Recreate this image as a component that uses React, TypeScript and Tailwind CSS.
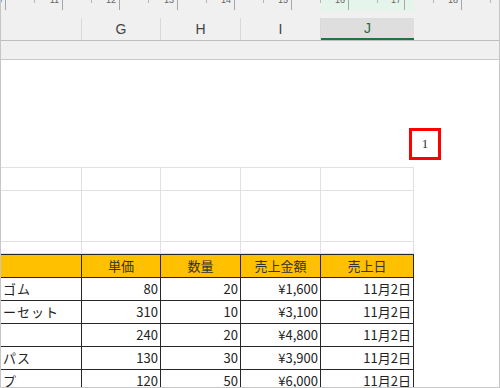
import React from "react";

// ─── Data ─────────────────────────────────────────────────────────
const columns = ["G", "H", "I", "J"];
const headers = ["", "単価", "数量", "売上金額", "売上日"];
const rows = [
  ["ゴム", "80", "20", "¥1,600", "11月2日"],
  ["ーセット", "310", "10", "¥3,100", "11月2日"],
  ["", "240", "20", "¥4,800", "11月2日"],
  ["パス", "130", "30", "¥3,900", "11月2日"],
  ["プ", "120", "50", "¥6,000", "11月2日"],
];
const gridCols = "grid w-[413px] grid-cols-[81px_79px_80px_80px_93px]";
const majors = [4, 61, 118, 176, 233, 290, 347, 403, 460];

// ─── Ruler ────────────────────────────────────────────────────────
function Ruler() {
  return (
    <svg width="498" height="11" className="block shrink-0">
      <rect x="320" y="0" width="93" height="11" fill="#e6f5eb" />
      {majors.map((x, i) => (
        <g key={i}>
          <line x1={x + 0.5} y1="0" x2={x + 0.5} y2="10" stroke="#a6a6a6" />
          <line x1={x + 29.5} y1="0" x2={x + 29.5} y2="3" stroke="#b5b5b5" />
          <text
            x={x - 3}
            y="3"
            textAnchor="end"
            fontSize="9"
            fill="#666"
            fontFamily="'Liberation Sans', sans-serif"
          >
            {10 + i}
          </text>
        </g>
      ))}
    </svg>
  );
}

// ─── App ──────────────────────────────────────────────────────────
export default function App() {
  return (
    <div
      className="w-[500px] h-[388px] overflow-hidden flex flex-col bg-[#f0f0f0] border-x border-b border-[#c6c6c6]"
      style={{ fontFamily: "'Noto Sans CJK JP', 'Liberation Sans', sans-serif" }}
    >
      <Ruler />

      {/* Column headers */}
      <div className="mt-[7px] h-[23px] shrink-0 flex border-b border-[#bdbdbd]">
        <div className="w-[81px] border-r border-[#d9d9d9]" />
        {columns.map((c, i) => (
          <div
            key={c}
            className={
              i === 3
                ? "w-[93px] flex items-center justify-center bg-[#dedede] border-b-2 border-[#217346] text-[14px] text-[#2a6b45] font-['Liberation_Sans']"
                : i === 0
                  ? "w-[79px] flex items-center justify-center border-r border-[#d9d9d9] text-[14px] text-[#444] font-['Liberation_Sans']"
                  : "w-[80px] flex items-center justify-center border-r border-[#d9d9d9] text-[14px] text-[#444] font-['Liberation_Sans']"
            }
          >
            {c}
          </div>
        ))}
      </div>

      {/* Page area */}
      <div className="mt-[18px] flex-1 relative bg-white border-t border-[#c8c8c8]">
        <div className="absolute left-[408px] top-[68px] w-[32px] h-[32px] border-[3px] border-[#ff0000] flex items-center justify-center text-[13px] text-[#333] font-['Liberation_Serif']">
          1
        </div>

        {/* Empty grid rows */}
        <div className={`${gridCols} mt-[107px] border-t border-[#e1e1e1]`}>
          {[22, 50, 11].map((h, r) =>
            headers.map((_, c) => (
              <div
                key={`${r}-${c}`}
                className="border-r border-b border-[#e1e1e1]"
                style={{ height: h + 1 }}
              />
            ))
          )}
        </div>

        {/* Table */}
        <div className={`${gridCols} border-t border-[#262626] text-[13px] text-[#222]`}>
          {headers.map((h, i) => (
            <div
              key={i}
              className="h-[23px] bg-[#ffc000] border-r border-b border-[#262626] flex items-center justify-center text-[#333]"
            >
              {h}
            </div>
          ))}
          {rows.map((row, r) =>
            row.map((v, c) => (
              <div
                key={`${r}-${c}`}
                className={
                  c === 0
                    ? "h-[23px] border-r border-b border-[#262626] flex items-center pl-[2px] tracking-[1px] whitespace-nowrap overflow-hidden"
                    : "h-[23px] border-r border-b border-[#262626] flex items-center justify-end pr-[2px]"
                }
              >
                {v}
              </div>
            ))
          )}
        </div>
      </div>
    </div>
  );
}
